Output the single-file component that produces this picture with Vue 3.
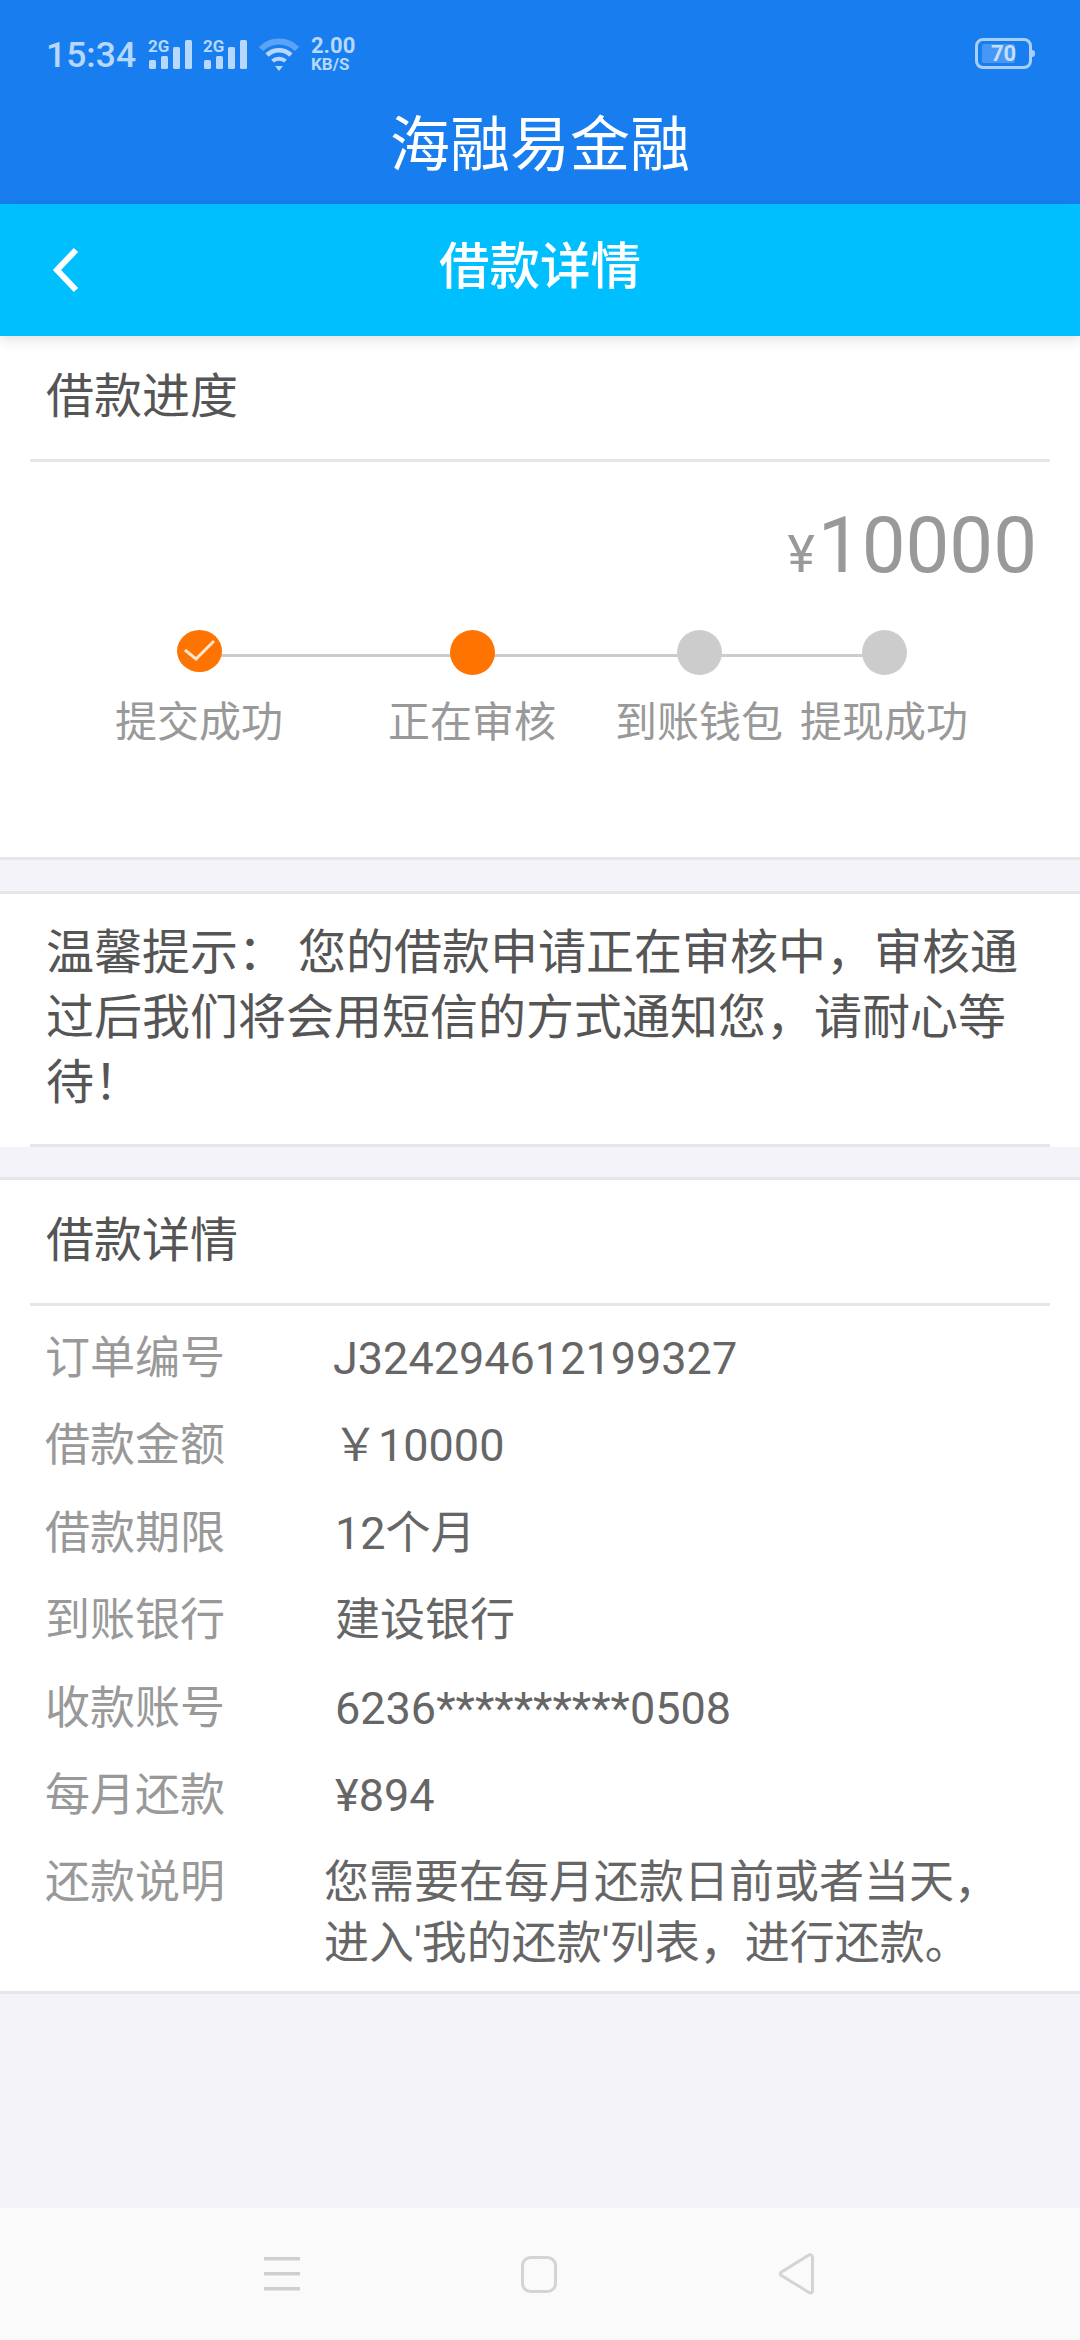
<template>
  <div class="page">
    <header class="top">
      <div class="status">
        <span class="clock">15:34</span>
        <div v-for="n in 2" :key="n" class="signal">
          <svg width="44" height="30" viewBox="0 0 44 30" fill="#b7d8fc">
            <rect x="1" y="21" width="7" height="9" rx="1.500" />
            <rect x="13" y="17" width="7" height="13" rx="1.500" />
            <rect x="25" y="8" width="7" height="22" rx="1.500" />
            <rect x="37" y="1" width="7" height="29" rx="1.500" />
          </svg>
          <span class="sim">2G</span>
        </div>
        <svg class="wifi" width="42" height="34" viewBox="0 0 42 34" fill="none">
          <path d="M3 11C13 1 29 1 39 11" stroke="#5aa3f5" stroke-width="6" />
          <path d="M9 17C16 10.500 26 10.500 33 17" stroke="#b7d8fc" stroke-width="4.500" />
          <path d="M14.500 23C18 20 24 20 27.500 23" stroke="#b7d8fc" stroke-width="4" />
          <path d="M17 28L25 28L21 33Z" fill="#b7d8fc" />
        </svg>
        <div class="speed"><span>2.00</span><span>KB/S</span></div>
        <div class="battery">
          <div class="battery-body">
            <div class="battery-fill"></div>
            <span class="battery-num">70</span>
          </div>
          <div class="battery-tip"></div>
        </div>
      </div>
      <div class="app-title">海融易金融</div>
    </header>

    <nav class="nav">
      <svg class="back" width="30" height="50" viewBox="0 0 30 50" fill="none">
        <path d="M26 5L7 25L26 45" stroke="#fff" stroke-width="6" />
      </svg>
      <span class="nav-title">借款详情</span>
    </nav>

    <section class="card progress">
      <h2 class="card-title">借款进度</h2>
      <div class="amount"><span class="yen">¥</span>10000</div>
      <div class="stepper">
        <div class="track"></div>
        <div v-for="step in steps" :key="step.label" class="step" :style="{ width: step.width + 'px' }">
          <div class="dot" :class="step.state">
            <svg v-if="step.state === 'done'" width="45" height="42" viewBox="0 0 45 42" fill="none">
              <path d="M8 20L19 29L37 11" stroke="#ffe6cf" stroke-width="3" />
            </svg>
          </div>
          <span class="step-label">{{ step.label }}</span>
        </div>
      </div>
    </section>

    <section class="card tip">
      <p>温馨提示： 您的借款申请正在审核中，审核通过后我们将会用短信的方式通知您，请耐心等待！</p>
    </section>

    <section class="card detail">
      <h2 class="card-title">借款详情</h2>
      <ul class="rows">
        <li v-for="row in rows" :key="row.label" class="row">
          <span class="row-label">{{ row.label }}</span>
          <span class="row-value" :style="{ marginLeft: row.shift + 'px' }">{{ row.value }}</span>
        </li>
      </ul>
    </section>

    <div class="spacer"></div>

    <footer class="softkeys">
      <svg width="36" height="34" viewBox="0 0 36 34" fill="#cfcfcf">
        <rect y="0" width="36" height="3.500" />
        <rect y="15" width="36" height="3.500" />
        <rect y="30" width="36" height="3.500" />
      </svg>
      <svg width="36" height="37" viewBox="0 0 36 37" fill="none">
        <rect x="1.500" y="1.500" width="33" height="34" rx="8" stroke="#d4d4d4" stroke-width="3" />
      </svg>
      <svg width="38" height="42" viewBox="0 0 38 42" fill="none">
        <path d="M34.500 4.500V37.500Q34.500 41 31 39.500L3.500 22.500Q1 21 3.500 19L31 2Q34.500 1 34.500 4.500Z" stroke="#d4d4d4" stroke-width="3" />
      </svg>
    </footer>
  </div>
</template>

<script setup>
const steps = [
  { label: '提交成功', state: 'done', width: 273 },
  { label: '正在审核', state: 'active', width: 227 },
  { label: '到账钱包', state: 'todo', width: 185 },
  { label: '提现成功', state: 'todo', width: 166 }
]

const rows = [
  { label: '订单编号', value: 'J324294612199327', shift: 0 },
  { label: '借款金额', value: '￥10000', shift: 0 },
  { label: '借款期限', value: '12个月', shift: 2 },
  { label: '到账银行', value: '建设银行', shift: 2 },
  { label: '收款账号', value: '6236**********0508', shift: 2 },
  { label: '每月还款', value: '¥894', shift: 2 },
  { label: '还款说明', value: "您需要在每月还款日前或者当天，进入'我的还款'列表，进行还款。", shift: -9 }
]
</script>

<style>
html, body {
  margin: 0;
  background: #f3f3f9;
}
</style>

<style scoped>
.page {
  display: flex;
  flex-direction: column;
  width: 1080px;
  height: 2340px;
  overflow: hidden;
  background: #f3f3f9;
  font-family: Roboto, "Noto Sans CJK SC", sans-serif;
  color: #555;
}

.top {
  height: 204px;
  background: #187ef0;
  color: #fff;
}

.status {
  display: flex;
  align-items: center;
  height: 110px;
  padding: 0 45px 0 46px;
  color: #b7d8fc;
  box-sizing: border-box;
}

.clock {
  width: 88px;
  margin-right: 14px;
  font-size: 35.500px;
  font-weight: 500;
  white-space: nowrap;
}

.signal {
  position: relative;
  width: 44px;
  height: 30px;
  margin: 0 11px 3px 0;
}

.signal svg {
  display: block;
}

.sim {
  position: absolute;
  left: 0;
  top: -1px;
  font-size: 17px;
  font-weight: 700;
  line-height: 16px;
}

.wifi {
  margin-right: 11px;
}

.speed {
  display: flex;
  flex-direction: column;
  font-size: 22px;
  font-weight: 700;
  line-height: 18px;
}

.speed span:last-child {
  font-size: 17px;
}

.battery {
  display: flex;
  align-items: center;
  margin: 0 0 3px auto;
}

.battery-body {
  position: relative;
  display: flex;
  align-items: center;
  justify-content: center;
  width: 57px;
  height: 31px;
  box-sizing: border-box;
  border: 3px solid #a8cffb;
  border-radius: 8px;
}

.battery-fill {
  position: absolute;
  left: 4px;
  top: 3px;
  bottom: 3px;
  width: 33px;
  background: #4797f4;
  border-radius: 2px;
}

.battery-num {
  position: relative;
  font-size: 22px;
  font-weight: 700;
  color: #c4dffd;
  line-height: 25px;
}

.battery-tip {
  width: 3px;
  height: 7px;
  background: #a8cffb;
  border-radius: 0 3px 3px 0;
}

.app-title {
  text-align: center;
  font-size: 60px;
  line-height: 72px;
}

.nav {
  position: relative;
  z-index: 1;
  display: flex;
  align-items: center;
  justify-content: center;
  height: 132px;
  background: #00bfff;
  box-shadow: 0 4px 12px rgba(0, 0, 0, 0.12);
}

.back {
  position: absolute;
  left: 50px;
  top: 41px;
}

.nav-title {
  margin-bottom: 16px;
  font-size: 50.500px;
  font-weight: 500;
  color: #fff;
}

.card {
  background: #fff;
  border-bottom: 3px solid #e6e6ea;
}

.progress {
  height: 521px;
}

.card-title {
  height: 123px;
  margin: 0 30px;
  padding-left: 16px;
  font-size: 48px;
  font-weight: 400;
  line-height: 122px;
  color: #555;
  border-bottom: 3px solid #e6e6ea;
}

.amount {
  margin-top: 39px;
  padding-right: 43px;
  text-align: right;
  font-size: 78px;
  line-height: 90px;
  color: #999;
}

.yen {
  margin-right: 3px;
  font-size: 52px;
}

.stepper {
  position: relative;
  display: flex;
  margin-top: 25px;
  padding-left: 62px;
}

.track {
  position: absolute;
  left: 199px;
  top: 29px;
  width: 684px;
  height: 3px;
  background: #ccc;
}

.step {
  position: relative;
  display: flex;
  flex-direction: column;
}

.dot {
  width: 45px;
  height: 45px;
  margin-left: 114.500px;
  margin-top: 5px;
  border-radius: 50%;
  background: #ccc;
}

.dot svg {
  display: block;
}

.dot.done {
  height: 42px;
  margin-bottom: 3px;
}

.dot.done,
.dot.active {
  background: #ff7300;
}

.step-label {
  width: 176px;
  margin-top: 23px;
  padding-left: 53px;
  font-size: 42px;
  line-height: 50px;
  color: #999;
  white-space: nowrap;
}

.tip {
  margin-top: 31px;
  border-top: 3px solid #e6e6ea;
  border-bottom: none;
}

.tip p {
  margin: 0 30px;
  padding: 26px 16px 29px;
  font-size: 48px;
  line-height: 65px;
  color: #555;
  border-bottom: 3px solid #e6e6ea;
}

.detail {
  margin-top: 30px;
  border-top: 3px solid #e6e6ea;
}

.rows {
  list-style: none;
  margin: 0;
  padding: 12px 45px 17px;
}

.row {
  display: grid;
  grid-template-columns: 288px 1fr;
  align-items: start;
  min-height: 87.400px;
  font-size: 45px;
  line-height: 62px;
}

.row-label {
  padding-top: 10px;
  color: #999;
}

.row-value {
  padding-top: 10px;
  color: #666;
  line-height: 61px;
}

.spacer {
  flex: 1;
}

.softkeys {
  display: flex;
  align-items: center;
  justify-content: space-between;
  height: 132px;
  padding: 0 264px;
  background: #fafafa;
  box-sizing: border-box;
}
</style>
